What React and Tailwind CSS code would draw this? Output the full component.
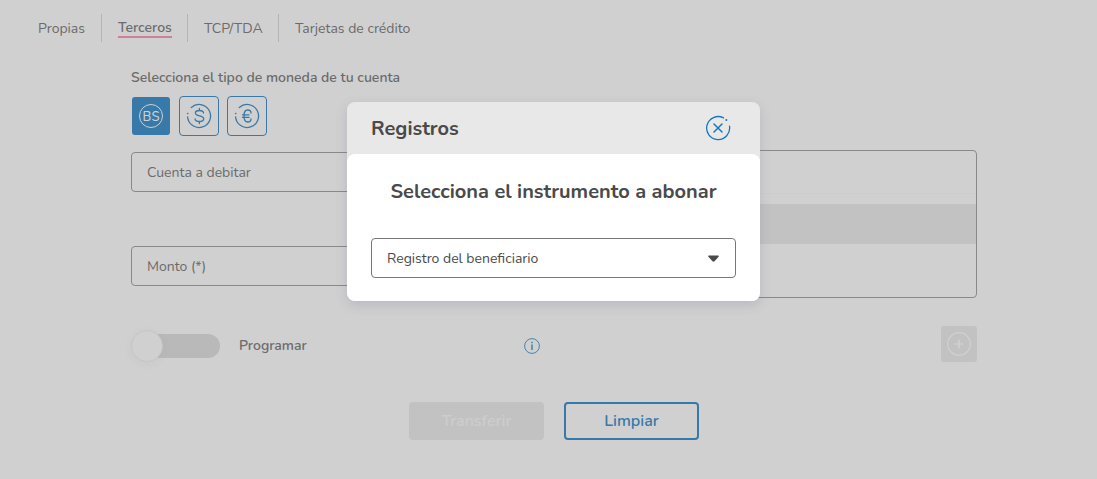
const tabs = [
  { label: "Propias", cell: "w-16 border-r" },
  { label: "Terceros", cell: "w-[86px] border-r pl-4", active: true },
  { label: "TCP/TDA", cell: "w-[91px] border-r pl-4" },
  { label: "Tarjetas de crédito", cell: "w-40 pl-4" },
];

function CurrencyRing({ children }) {
  return (
    <svg className="h-[26px] w-[26px]" viewBox="0 0 26 26" fill="none" stroke="currentColor" strokeWidth="1.3" strokeLinecap="round" strokeLinejoin="round">
      <path d="M5.300 4.500A11.500 11.500 0 1 1 1.600 14" />
      <path d="M1.600 10.500h.2" strokeWidth="1.600" />
      {children}
    </svg>
  );
}

function Currencies() {
  return (
    <div className="flex h-10 items-center gap-2 text-[#3779a8]">
      <button className="mx-px flex h-[38px] w-[38px] items-center justify-center rounded-[3px] bg-[#3779a8] text-[#d0d0d0]">
        <span className="flex h-6 w-6 items-center justify-center rounded-full border border-current pt-0.5 text-[13px] font-medium leading-none">BS</span>
      </button>
      <button className="flex h-10 w-10 items-center justify-center rounded border border-current">
        <CurrencyRing>
          <path d="M13.400 5.500v2m0 11v2M17.500 10c-.2-1.700-1.700-2.500-4.100-2.500-2.500 0-4 1-4 2.600 0 3.900 8.300 1.800 8.300 5.700 0 1.900-1.700 2.700-4.200 2.700S9.100 17.600 9.100 15.800" />
        </CurrencyRing>
      </button>
      <button className="flex h-10 w-10 items-center justify-center rounded border border-current">
        <CurrencyRing>
          <path d="M17 10c0-2-1.300-3-3.300-3-2.600 0-3.700 1.700-3.700 5.800s1.100 6.200 3.700 6.200c2 0 3.300-1 3.300-3M8.500 11.800h6.500M8.500 14.400h6.500" />
        </CurrencyRing>
      </button>
    </div>
  );
}

function TransferForm() {
  return (
    <main className="ml-[131px] w-[846px]">
      <div className="mt-[27px] flex h-4 items-center text-[14px] font-semibold">Selecciona el tipo de moneda de tu cuenta</div>
      <div className="mt-[11px] flex h-[202px] justify-between">
        <div className="w-[408px]">
          <Currencies />
          <div className="mt-4 flex h-10 items-center rounded border border-[#88898a] px-[15px] text-[14px]">Cuenta a debitar</div>
          <div className="mt-[54px] flex h-10 items-center rounded border border-[#88898a] px-[15px] text-[14px]">Monto (*)</div>
        </div>
        <div className="mt-[54px] h-[148px] w-[408px] rounded border border-[#88898a]">
          <div className="h-[43px] border-b border-[#cdcdcd]" />
          <div className="mt-[10px] h-10 bg-[#c2c2c2]" />
        </div>
      </div>
      <div className="mt-7 flex h-10 items-center">
        <div className="flex h-8 w-[89px] items-center">
          <div className="z-10 h-8 w-8 shrink-0 rounded-full border border-[#c6c6c6] bg-[#d0d0d0] shadow-[0_2px_8px_rgba(100,100,120,0.06)]" />
          <div className="-ml-4 h-6 w-[73px] rounded-r-full bg-[#b9b9b9]" />
        </div>
        <span className="mb-0.5 ml-[19px] w-[285px] text-[14px] font-semibold">Programar</span>
        <svg className="h-4 w-4 text-[#4785ae]" viewBox="0 0 16 16" fill="none" stroke="currentColor">
          <circle cx="8" cy="8" r="7.4" />
          <path d="M8 6.5v5.500" strokeWidth="1.600" />
          <path d="M8 3.700v1.500" strokeWidth="1.600" />
        </svg>
        <button className="mb-1 ml-auto flex h-9 w-9 items-center justify-center rounded-[3px] bg-[#c2c2c2] text-[#d0d0d0]">
          <svg className="h-6 w-6" viewBox="0 0 24 24" fill="none" stroke="currentColor">
            <circle cx="12" cy="12" r="11.3" strokeWidth="1.2" />
            <path d="M12 7.8v8.4M7.8 12h8.4" strokeWidth="1.7" />
          </svg>
        </button>
      </div>
      <div className="mt-9 flex justify-center gap-5 text-[16px] font-semibold">
        <button className="h-[38px] w-[135px] rounded bg-[#c2c2c2] text-[#cdcdcd]">Transferir</button>
        <button className="h-[38px] w-[135px] rounded border-2 border-[#3779a8] text-[#3779a8]">Limpiar</button>
      </div>
    </main>
  );
}

function RecordsDialog() {
  return (
    <section role="dialog" className="absolute left-[347px] top-[102px] z-20 w-[413px] rounded-lg bg-[#e8e8e8] text-[#4a4a4a] shadow-[0_4px_12px_rgba(90,95,140,0.2)]">
      <header className="flex h-[52px] items-center justify-between pl-6 pr-[29px]">
        <h2 className="pt-0.5 text-[20px] font-bold">Registros</h2>
        <button className="text-[#1877b6]">
          <svg className="h-[26px] w-[26px]" viewBox="0 0 26 26" fill="none" stroke="currentColor" strokeLinecap="round">
            <path d="M24.500 11.200A11.500 11.500 0 1 1 18.500 2.900" strokeWidth="1.300" />
            <path d="M21.300 5h.1" strokeWidth="1.900" />
            <path d="m9 9 8 8m0-8-8 8" strokeWidth="1.500" />
          </svg>
        </button>
      </header>
      <div className="h-[147px] rounded-lg bg-white px-6 pt-6">
        <h3 className="h-[30px] whitespace-nowrap text-center text-[20px] font-bold leading-[28px]">Selecciona el instrumento a abonar</h3>
        <div className="mt-[30px] flex h-10 items-center justify-between rounded border border-[#777] px-[15px]">
          <span className="text-[14px]">Registro del beneficiario</span>
          <svg className="mr-px h-[7px] w-[11px]" viewBox="0 0 11 7" fill="#4a4a4a"><path d="M.8.500h9.400q1 .2.400 1.200L6.500 6.200q-1 .9-2 0L.4 1.700Q-.2.700.8.500Z" /></svg>
        </div>
      </div>
    </section>
  );
}

export default function App() {
  return (
    <div className="relative h-[479px] w-[1097px] overflow-hidden bg-[#d0d0d0] font-['Nunito','Lato',sans-serif] text-[#6b6b6b]">
      <nav className="flex pl-[38px] pt-[14px] text-[14px]">
        {tabs.map((t) => (
          <div key={t.label} className={`flex h-7 items-center whitespace-nowrap border-[#b5b5b5] ${t.cell}`}>
            {t.active ? <span className="border-b-2 border-[#ce7f99] pt-px font-semibold leading-[17px]">{t.label}</span> : t.label}
          </div>
        ))}
      </nav>
      <TransferForm />
      <RecordsDialog />
    </div>
  );
}
